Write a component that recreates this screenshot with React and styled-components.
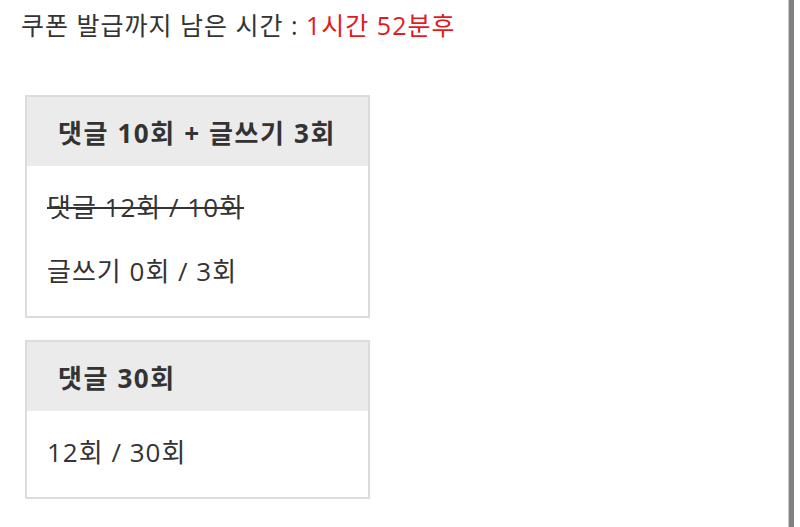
import React from "react";
import styled, { createGlobalStyle } from "styled-components";

const Global = createGlobalStyle`
  html, body { margin: 0; padding: 0; background: #fff; }
  body { font-family: "Open Sans", "Noto Sans CJK KR", sans-serif; color: #333; }
  * { box-sizing: border-box; }
`;

const Page = styled.div`
  display: flex;
  width: 800px;
  height: 527px;
  overflow: hidden;
`;

const Main = styled.div`
  flex: 1;
  padding: 0 0 0 21px;
  background: #fff;
`;

const Scrollbar = styled.div`
  width: 6px;
  margin-right: 6px;
  background: #808080;
  border-left: 1px solid #c8c8c8;
`;

const Timer = styled.p`
  margin: 0;
  height: 50px;
  line-height: 50px;
  font-size: 25px;
  letter-spacing: 1px;
  color: #333;
`;

const Red = styled.span`
  color: #e3191c;
`;

const Cards = styled.div`
  display: flex;
  flex-direction: column;
  gap: 22px;
  margin-top: 45px;
  margin-left: 4px;
`;

const Card = styled.div`
  width: 345px;
  border: 2px solid #dcdcdc;
  background: #fff;
`;

const CardHead = styled.div`
  height: 69px;
  display: flex;
  align-items: center;
  padding-left: 31px;
  background: #ebebeb;
  font-size: 26px;
  font-weight: 700;
  letter-spacing: 1.6px;
  color: #333;
`;

const CardBody = styled.div`
  display: flex;
  flex-direction: column;
  gap: 24px;
  padding: 21px 0 25px 20px;
`;

const Line = styled.div`
  line-height: 40px;
  font-size: 26px;
  letter-spacing: 1px;
  color: #333;
  text-decoration: ${(p) => (p.$done ? "line-through" : "none")};
  text-decoration-thickness: 2px;
`;

export default function App() {
  return (
    <>
      <Global />
      <Page>
        <Main>
          <Timer>
            쿠폰 발급까지 남은 시간 : <Red>1시간 52분후</Red>
          </Timer>
          <Cards>
            <Card>
              <CardHead>댓글 10회 + 글쓰기 3회</CardHead>
              <CardBody>
                <Line $done>댓글 12회 / 10회</Line>
                <Line>글쓰기 0회 / 3회</Line>
              </CardBody>
            </Card>
            <Card>
              <CardHead>댓글 30회</CardHead>
              <CardBody>
                <Line>12회 / 30회</Line>
              </CardBody>
            </Card>
          </Cards>
        </Main>
        <Scrollbar />
      </Page>
    </>
  );
}
